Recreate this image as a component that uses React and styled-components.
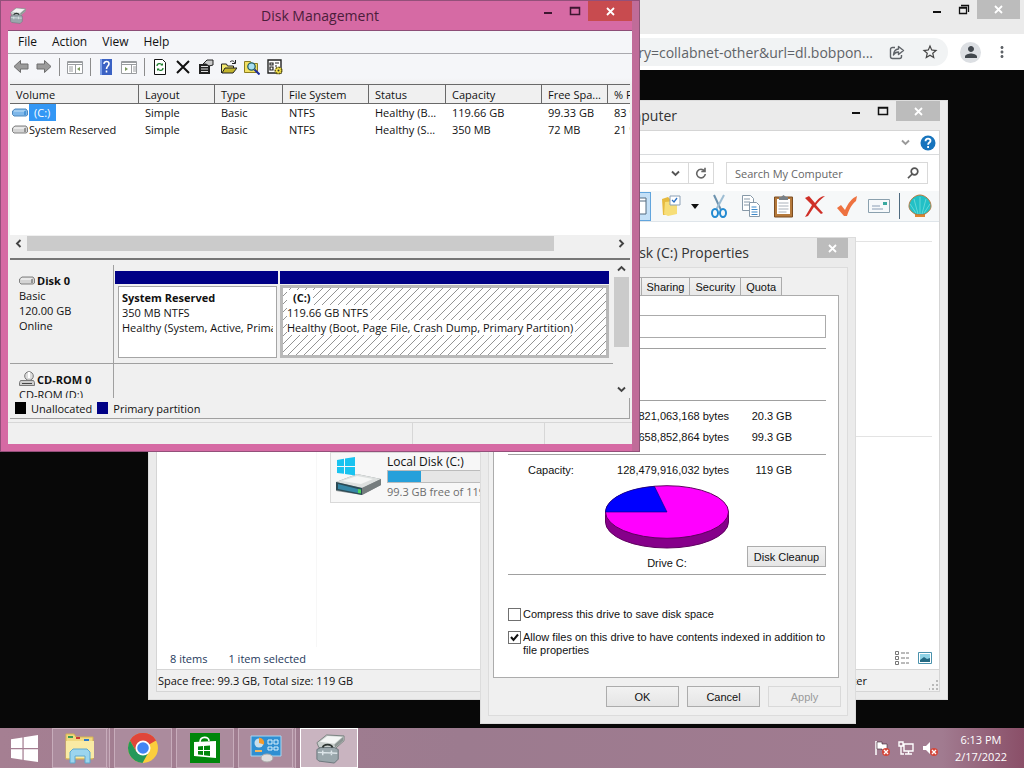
import React from "react";
import styled, { createGlobalStyle, css } from "styled-components";
import { MdStarBorder, MdPerson, MdMoreVert } from "react-icons/md";

const Global = createGlobalStyle`
  * { box-sizing: border-box; }
  body { margin: 0; background: #080808; font-family: "Open Sans", "Noto Sans", sans-serif; font-size: 11px; color: #111; }
  button, input { font: inherit; color: inherit; margin: 0; padding: 0; }
  button { background: none; border: 0; }
  svg { display: block; flex: none; }
`;

const Desktop = styled.div`
  position: relative;
  min-height: 100vh;
  display: flex;
  flex-direction: column;
  justify-content: flex-end;
  overflow: hidden;
  background: #080808;
`;

/* ---------- shared window parts ---------- */
const Window = styled.section`
  position: absolute;
  left: ${(p) => p.$x}px;
  top: ${(p) => p.$y}px;
  width: ${(p) => p.$w}px;
  min-height: ${(p) => p.$h}px;
  display: flex;
  flex-direction: column;
  background: #ebebeb;
  border: 1px solid #dcdcdc;
  padding: 0 7px 7px;
`;
const TitleBar = styled.header`
  display: flex;
  align-items: flex-start;
  height: 29px;
  flex: none;
`;
const Title = styled.h1`
  flex: 1;
  margin: 0;
  font-size: 14px;
  font-weight: 400;
  line-height: 30px;
  text-align: ${(p) => p.$align || "center"};
  color: ${(p) => p.$color || "#333"};
  white-space: nowrap;
`;
const WinButton = styled.button`
  display: flex;
  align-items: center;
  justify-content: center;
  width: ${(p) => p.$w || 27}px;
  height: ${(p) => p.$h || 20}px;
  color: ${(p) => p.$color || "#111"};
  background: ${(p) => p.$bg || "transparent"};
`;

const MinIcon = () => (
  <svg width="10" height="10" viewBox="0 0 10 10"><rect x="1" y="6" width="8" height="2" fill="currentColor" /></svg>
);
const MaxIcon = () => (
  <svg width="12" height="10" viewBox="0 0 12 10"><path d="M1.500 1.500h9v7h-9zM1 2h10" fill="none" stroke="currentColor" strokeWidth="1.500" /></svg>
);
const RestoreIcon = () => (
  <svg width="12" height="12" viewBox="0 0 12 12"><path d="M1.500 3.500h7v6h-7zM1 4h8M3 1.500h7.500v6.500" fill="none" stroke="currentColor" strokeWidth="1.300" /></svg>
);
const CloseIcon = () => (
  <svg width="9" height="9" viewBox="0 0 9 9"><path d="M1 1l7 7M8 1L1 8" stroke="#fff" strokeWidth="1.800" /></svg>
);
const Chevron = ({ dir = "down", color = "#444", size = 9 }) => {
  const turn = { down: 0, up: 180, left: 90, right: 270 }[dir];
  return (
    <svg width={size} height={size} viewBox="0 0 9 9">
      <path d="M1 2.500l3.500 3.500L8 2.500" fill="none" stroke={color} strokeWidth="1.900" transform={`rotate(${turn} 4.500 4.500)`} />
    </svg>
  );
};

/* ---------- browser ---------- */
const Browser = styled.section`
  position: absolute;
  inset: 0 0 auto 0;
  background: #fff;
`;
const TabStrip = styled.div`
  display: flex;
  justify-content: flex-end;
  height: 34px;
  padding-right: 4px;
  background: #ebebeb;
`;
const BrowserBar = styled.div`
  display: flex;
  align-items: center;
  gap: 12px;
  height: 36px;
  padding: 0 13px 0 60px;
`;
const UrlPill = styled.div`
  flex: 1;
  display: flex;
  align-items: center;
  justify-content: flex-end;
  gap: 16px;
  height: 28px;
  padding-right: 9px;
  border-radius: 14px;
  background: #f1f3f4;
  color: #5f6368;
  font-size: 14px;
  white-space: nowrap;
`;
const Avatar = styled.button`
  display: flex;
  align-items: center;
  justify-content: center;
  width: 21px;
  height: 21px;
  border-radius: 50%;
  background: #dcdfe3;
  color: #41474d;
`;
const PlainButton = styled.button`
  display: flex;
  align-items: center;
  justify-content: center;
  color: #5f6368;
`;

function BrowserWindow() {
  return (
    <Browser>
      <TabStrip>
        <WinButton aria-label="Minimize"><MinIcon /></WinButton>
        <WinButton aria-label="Restore"><RestoreIcon /></WinButton>
        <WinButton aria-label="Close" $w={43} $h={19} $bg="#bcbcbc"><CloseIcon /></WinButton>
      </TabStrip>
      <BrowserBar>
        <UrlPill>
          <span>category=collabnet-other&amp;url=dl.bobpon...</span>
          <PlainButton aria-label="Share">
            <svg width="16" height="15" viewBox="0 0 16 15" fill="none" stroke="#5f6368" strokeWidth="1.400">
              <path d="M6 2.500H3.500A2 2 0 0 0 1.500 4.500v7a2 2 0 0 0 2 2h7a2 2 0 0 0 2-2V10" />
              <path d="M9.500 1.500l5 4-5 4V7C7 7 5.500 8 4.500 10 4.700 6.500 6.500 4.300 9.500 4z" strokeLinejoin="round" />
            </svg>
          </PlainButton>
          <PlainButton aria-label="Bookmark"><MdStarBorder size={18} color="#444" /></PlainButton>
        </UrlPill>
        <Avatar aria-label="Profile"><MdPerson size={18} /></Avatar>
        <PlainButton aria-label="Menu"><MdMoreVert size={18} /></PlainButton>
      </BrowserBar>
    </Browser>
  );
}

/* ---------- file explorer ---------- */
const ExplorerBody = styled.div`
  flex: 1;
  display: flex;
  flex-direction: column;
  border: 1px solid #d5d5d5;
  background: #fff;
`;
const RibbonRow = styled.div`
  display: flex;
  align-items: center;
  justify-content: flex-end;
  gap: 10px;
  height: 24px;
  padding-right: 3px;
  border-bottom: 1px solid #d9dbdd;
`;
const AddressRow = styled.div`
  display: flex;
  gap: 12px;
  padding: 7px 11px 7px 12px;
  height: 36px;
`;
const AddressBox = styled.div`
  flex: 1;
  display: flex;
  justify-content: flex-end;
  border: 1px solid #d9d9d9;
`;
const AddressButton = styled.button`
  width: 25px;
  display: flex;
  align-items: center;
  justify-content: ${(p) => p.$align || "center"};
  & + & { border-left: 1px solid #d9d9d9; }
`;
const SearchBox = styled.label`
  display: flex;
  align-items: center;
  width: 202px;
  height: 22px;
  padding: 0 8px;
  border: 1px solid #d9d9d9;
  input { flex: 1; min-width: 0; border: 0; outline: 0; background: none; }
  input::placeholder { color: #666; opacity: 1; }
`;
const IconRow = styled.div`
  display: flex;
  align-items: center;
  justify-content: flex-end;
  gap: 8px;
  height: 31px;
  padding-right: 7px;
  background: #f6f8f9;
  border-bottom: 1px solid #dfe5ea;
`;
const IconButton = styled.button`
  width: ${(p) => p.$w || 24}px;
  height: 29px;
  display: flex;
  align-items: center;
  justify-content: center;
  ${(p) => p.$active && css`background: #c4e0f7; border: 1px solid #62a5dd;`}
`;
const Rule = styled.span`
  width: 1px;
  height: 26px;
  background: #4f6b80;
`;
const Panes = styled.div`
  flex: 1;
  display: grid;
  grid-template-columns: 160px 1fr;
`;
const NavPane = styled.nav`border-right: 1px solid #f7f7f7;`;
const Groups = styled.div`padding: 19px 7px 0 13px;`;
const Group = styled.section`
  min-height: 195px;
  border-top: 1px solid #e3e3e3;
  padding-top: 15px;
`;
const DriveTile = styled.article`
  display: flex;
  align-items: flex-start;
  gap: 5px;
  width: 256px;
  height: 51px;
  padding-left: 3px;
  border: 1px solid #d9d9d9;
  background: #f7f7f7;
  p { margin: 0; line-height: 17px; font-size: 12px; white-space: nowrap; }
  p:last-child { color: #6d6d6d; font-size: 11px; }
`;
const DriveBar = styled.div`
  width: 190px;
  height: 13px;
  border: 1px solid #bcbcbc;
  background: linear-gradient(90deg, #26a0da 0 33px, #e6e6e6 33px);
`;
const ItemBar = styled.footer`
  display: flex;
  align-items: center;
  gap: 21px;
  height: 22px;
  padding: 0 7px 0 13px;
  color: #1e395b;
`;
const Spacer = styled.span`
  flex: 1;
  ${(p) => p.$max && css`max-width: ${p.$max}px;`}
`;
const ViewIcons = styled.div`
  display: flex;
  align-items: center;
  gap: 8px;
`;
const StatusLine = styled.footer`
  display: flex;
  align-items: center;
  justify-content: space-between;
  height: 22px;
  padding: 0 72px 0 1px;
  border-top: 1px solid #d5d5d5;
  background: #f0f0f0;
`;
const Grip = styled.svg`
  position: absolute;
  right: 8px;
  bottom: 9px;
`;

const WindowsFlag = (p) => (
  <svg width={p.size} height={p.size} viewBox="0 0 26 26" fill={p.color}>
    <path d="M0 4l11-1.700V12.500H0zM12.200 2.100L26 0v12.500H12.200zM0 13.700h11v10.200L0 22.200zM12.200 13.700H26V26l-13.800-2z" />
  </svg>
);

const DriveArt = () => (
  <svg width="48" height="45" viewBox="0 -3 48 45">
    <path d="M2 26l21-8 24 5v6L28 39 2 35z" fill="#8d9496" />
    <path d="M2 26l21-8 24 5-19 9z" fill="#dde0df" />
    <path d="M8 25l15-5 16 3-12 5z" fill="#f5f6f5" />
    <path d="M2 26l26 6v7L2 34z" fill="#2b4a55" />
    <path d="M4 28l20 5v4L4 33z" fill="#3686a5" />
    <path d="M28 32l19-9v6L28 39z" fill="#767d7e" />
    <path d="M24 33l3 .600v4L24 37z" fill="#4bd65b" />
    <path d="M3 4l7-1.300V10H3zM11 2.500l10-1.500v9H11zM3 11h7v6.800L3 17zM11 11h10v8.500L11 18z" fill="#19c3f0" />
  </svg>
);

function Explorer() {
  return (
    <Window $x={148} $y={100} $w={800} $h={600}>
      <TitleBar>
        <Title $align="right">My Computer</Title>
        <Spacer $max={165} />
        <WinButton aria-label="Minimize"><MinIcon /></WinButton>
        <WinButton aria-label="Maximize"><MaxIcon /></WinButton>
        <WinButton aria-label="Close" $w={44} $bg="#bcbcbc"><CloseIcon /></WinButton>
      </TitleBar>
      <ExplorerBody>
        <RibbonRow>
          <Chevron color="#999" />
          <PlainButton aria-label="Help">
            <svg width="16" height="16" viewBox="0 0 16 16">
              <circle cx="8" cy="8" r="7.500" fill="#1774bd" />
              <path d="M5.500 6.200c0-3.500 5.200-3.300 5-.300-.100 1.700-2.400 1.700-2.400 3.800M8.100 11v2" fill="none" stroke="#fff" strokeWidth="1.800" />
            </svg>
          </PlainButton>
        </RibbonRow>
        <AddressRow>
          <AddressBox>
            <AddressButton aria-label="Previous locations"><Chevron color="#555" /></AddressButton>
            <AddressButton aria-label="Refresh">
              <svg width="12" height="12" viewBox="0 0 12 12" fill="none" stroke="#666" strokeWidth="1.600"><path d="M9.500 4A4.300 4.300 0 1 0 10.300 7M10 .800V4.500H6.300" /></svg>
            </AddressButton>
          </AddressBox>
          <SearchBox>
            <input aria-label="Search My Computer" placeholder="Search My Computer" />
            <svg width="12" height="12" viewBox="0 0 12 12" fill="none" stroke="#555" strokeWidth="1.700"><circle cx="7.500" cy="4.500" r="3.300" /><path d="M5.200 7L1 11.200" /></svg>
          </SearchBox>
        </AddressRow>
        <IconRow>
          <IconButton $active aria-label="Panes"><svg width="16" height="20" viewBox="0 0 16 20"><path d="M1 2h14v16H1zM1 5h14" fill="#fff" stroke="#536b80" /></svg></IconButton>
          <IconButton aria-label="Folder options">
            <svg width="22" height="24" viewBox="0 0 22 24"><path d="M2 5l6-2 3 3v14l-8 1z" fill="#e7bb3f" /><path d="M5 8l9-1 3 4v9l-9 2-4-2z" fill="#f7de78" /><path d="M10 2h10v9H10z" fill="#fff" stroke="#8ba0b5" /><path d="M12 6l2 2 3-4" fill="none" stroke="#2a6fc4" strokeWidth="1.300" /></svg>
          </IconButton>
          <IconButton $w={8} aria-label="More options"><svg width="8" height="5" viewBox="0 0 8 5"><path d="M0 0h8L4 5z" fill="#111" /></svg></IconButton>
          <IconButton aria-label="Cut">
            <svg width="18" height="24" viewBox="0 0 18 24" fill="none"><path d="M4 1l7 15" stroke="#6c92ae" strokeWidth="2" /><path d="M14 1L6 16" stroke="#9dbdd3" strokeWidth="2" /><ellipse cx="5" cy="19" rx="3" ry="4" stroke="#238ad1" strokeWidth="2" /><ellipse cx="13" cy="19" rx="3" ry="4" stroke="#238ad1" strokeWidth="2" /></svg>
          </IconButton>
          <IconButton aria-label="Copy">
            <svg width="20" height="24" viewBox="0 0 20 24" fill="#fff" stroke="#8799a8"><path d="M1.500 1.500h8l3 3v12h-11zM3 5h6M3 8h6M3 11h5" /><path d="M8.500 8.500h7l3 3v11h-10z" /><path d="M10.500 13h5M10.500 15.500h6M10.500 18h6M10.500 20.500h6" stroke="#3b87c8" /></svg>
          </IconButton>
          <IconButton aria-label="Paste">
            <svg width="21" height="24" viewBox="0 0 21 24"><path d="M1.500 3h18v20h-18z" fill="#b5793b" stroke="#7b4d22" /><path d="M4 5h13v15H4z" fill="#fff" /><path d="M5.500 9h10M5.500 12h10M5.500 15h10M5.500 18h8" stroke="#aab2bb" /><path d="M6 3h2l2.500-2L13 3h2v3H6z" fill="#788087" /></svg>
          </IconButton>
          <IconButton aria-label="Delete">
            <svg width="22" height="22" viewBox="0 0 22 22"><path d="M1 3l4-2 6 7c3-4 6-7 10-7-4 3-7 6-9 9l7 8-2 1-7-7-6 9-3 1 7-12z" fill="#cf2f27" /></svg>
          </IconButton>
          <IconButton aria-label="Apply properties">
            <svg width="22" height="22" viewBox="0 0 22 22"><path d="M1 13l4-3 4 5C12 8 16 3 21 1l-1 5c-5 4-7 9-9 15H8z" fill="#ee7240" /></svg>
          </IconButton>
          <IconButton aria-label="Mail">
            <svg width="22" height="16" viewBox="0 0 22 16"><path d="M.500 1.500h21v13H.500z" fill="#f6f9fb" stroke="#8aa0ae" /><path d="M15 4h4v3h-4z" fill="#39a9a0" /><path d="M4 8h8M4 11h11" stroke="#8a9db5" /></svg>
          </IconButton>
          <Rule />
          <IconButton aria-label="Shell">
            <svg width="24" height="24" viewBox="0 0 24 24"><path d="M7 17h10v6H7z" fill="#df8430" /><path d="M12 1c5 0 11 5 11 11 0 4-3 6-6 8-3 1-7 1-10 0-3-2-6-4-6-8C1 6 7 1 12 1z" fill="#22c0c6" stroke="#b9793f" /><path d="M12 20V3M10 20L6 5M14 20l4-15M8 19L2 10M16 19l6-9" stroke="#63d8d8" fill="none" /></svg>
          </IconButton>
        </IconRow>
        <Panes>
          <NavPane />
          <Groups>
            <Group />
            <Group>
              <DriveTile>
                <DriveArt />
                <div>
                  <p>Local Disk (C:)</p>
                  <DriveBar />
                  <p>99.3 GB free of 119 GB</p>
                </div>
              </DriveTile>
            </Group>
          </Groups>
        </Panes>
        <ItemBar>
          <span>8 items</span>
          <span>1 item selected</span>
          <Spacer />
          <ViewIcons>
            <svg width="16" height="14" viewBox="0 0 16 14" fill="none" stroke="#777"><path d="M1.500.500h3v3h-3zM1.500 5.500h3v3h-3zM1.500 10.500h3v3h-3z" /><path d="M7 2h8M7 7h8M7 12h8" strokeDasharray="4 1" /></svg>
            <svg width="14" height="12" viewBox="0 0 14 12"><path d="M.500.500h13v11H.500z" fill="#fff" stroke="#4a92ad" /><path d="M2 2h10v8H2z" fill="#8fd3e6" /><path d="M2 8l4-3 3 2 3-1v4H2z" fill="#246982" /></svg>
          </ViewIcons>
        </ItemBar>
        <StatusLine>
          <span>Space free: 99.3 GB, Total size: 119 GB</span>
          <span>Computer</span>
        </StatusLine>
      </ExplorerBody>
      <Grip width="10" height="10" viewBox="0 0 10 10"><path d="M7 0h2v2H7zM7 4h2v2H7zM3 4h2v2H3zM7 8h2v2H7zM3 8h2v2H3zM0 8h1v2H0z" fill="#b9b9b9" /></Grip>
    </Window>
  );
}

/* ---------- drive properties ---------- */
const PropsBody = styled.div`
  flex: 1;
  display: flex;
  flex-direction: column;
  padding: 9px 6px 8px 4px;
  border: 1px solid #dcdcdc;
  background: #f0f0f0;
  font-family: "Liberation Sans", Arial, sans-serif;
  font-size: 11px;
`;
const TabRow = styled.div`
  display: flex;
  height: 18px;
  padding-left: 2px;
`;
const Tab = styled.button`
  padding: 0 5px;
  border: 1px solid #acacac;
  border-bottom: 0;
  border-left-width: ${(p) => (p.$first ? 1 : 0)}px;
  background: ${(p) => (p.$first ? "#fff" : "linear-gradient(#f2f2f2, #e8e8e8)")};
`;
const TabPage = styled.div`
  flex: 1;
  display: flex;
  flex-direction: column;
  margin-right: 2px;
  padding: 19px 12px 10px 14px;
  border: 1px solid #acacac;
  background: #fff;
`;
const VolumeInput = styled.input`
  width: 246px;
  height: 23px;
  align-self: flex-end;
  border: 1px solid #ababab;
  background: #fff;
`;
const Divider = styled.hr`
  width: 100%;
  margin: ${(p) => p.$top}px 0 0;
  border: 0;
  border-top: 1px solid #a0a0a0;
`;
const SizeTable = styled.table`
  border-collapse: collapse;
  width: 284px;
  margin-top: ${(p) => p.$top}px;
  td, th { height: 21px; padding: 0; font-weight: 400; }
  th { text-align: left; padding-left: 20px; }
  td { text-align: right; }
  td:last-child { width: 63px; }
`;
const PieRow = styled.div`
  display: grid;
  grid-template-columns: 1fr 124px 1fr;
  align-items: end;
  margin-top: 5px;
  > button { margin-bottom: 4px; }
`;
const PieFigure = styled.figure`
  margin: 0;
  grid-column: 2;
  text-align: center;
  figcaption { line-height: 16px; margin-top: 6px; }
`;
const PushButton = styled.button`
  width: ${(p) => p.$w || 73}px;
  height: 21px;
  border: 1px solid ${(p) => (p.disabled ? "#d9d9d9" : "#acacac")};
  background: ${(p) => (p.disabled ? "#efefef" : "linear-gradient(#f2f2f2, #e5e5e5)")};
  color: ${(p) => (p.disabled ? "#9a9a9a" : "#111")};
  justify-self: end;
`;
const CheckLabel = styled.label`
  display: flex;
  align-items: flex-start;
  gap: 2px;
  margin: ${(p) => p.$top}px -10px 0 0;
  line-height: 13px;
  input {
    appearance: none;
    flex: none;
    display: block;
    width: 13px;
    height: 13px;
    border: 1px solid #707070;
    background: #fff;
  }
`;
const CheckBoxWrap = styled.span`
  position: relative;
  flex: none;
  display: block;
  height: 13px;
  svg { position: absolute; inset: 2px; pointer-events: none; }
`;
const DialogButtons = styled.div`
  display: flex;
  justify-content: flex-end;
  gap: 8px;
  padding: 8px 0 0;
`;

function Check({ checked, top, children }) {
  return (
    <CheckLabel $top={top}>
      <CheckBoxWrap>
        <input type="checkbox" defaultChecked={checked} />
        {checked && <svg width="9" height="9" viewBox="0 0 9 9"><path d="M1 4l2.500 3L8 1.500" fill="none" stroke="#111" strokeWidth="2" /></svg>}
      </CheckBoxWrap>
      <span>{children}</span>
    </CheckLabel>
  );
}

function Properties() {
  return (
    <Window $x={480} $y={237} $w={376} $h={487}>
      <TitleBar>
        <Spacer $max={32} />
        <Title>Local Disk (C:) Properties</Title>
        <WinButton aria-label="Close" $w={31} $bg="#bcbcbc"><CloseIcon /></WinButton>
      </TitleBar>
      <PropsBody>
        <TabRow>
          <Tab $first>General</Tab>
          <Tab>Tools</Tab>
          <Tab>Hardware</Tab>
          <Tab>Sharing</Tab>
          <Tab>Security</Tab>
          <Tab>Quota</Tab>
        </TabRow>
        <TabPage>
          <VolumeInput aria-label="Volume label" />
          <Divider $top={10} />
          <Divider $top={51} />
          <SizeTable $top={4}>
            <tbody>
              <tr><th scope="row">Used space:</th><td>21,821,063,168 bytes</td><td>20.3 GB</td></tr>
              <tr><th scope="row">Free space:</th><td>106,658,852,864 bytes</td><td>99.3 GB</td></tr>
            </tbody>
          </SizeTable>
          <Divider $top={7} />
          <SizeTable $top={4}>
            <tbody>
              <tr><th scope="row">Capacity:</th><td>128,479,916,032 bytes</td><td>119 GB</td></tr>
            </tbody>
          </SizeTable>
          <PieRow>
            <PieFigure>
              <svg width="124" height="64" viewBox="0 0 124 64">
                <path d="M.500 27v10a61.500 26 0 0 0 123 0V27z" fill="#86008a" stroke="#600060" strokeWidth="1" />
                <ellipse cx="62" cy="27" rx="61.500" ry="26.300" fill="#f0f" stroke="#600060" strokeWidth="1" />
                <path d="M62 27H.500C1 14 22 3 49.500 1.500z" fill="#00f" stroke="#00007a" strokeWidth=".6" />
              </svg>
              <figcaption>Drive C:</figcaption>
            </PieFigure>
            <PushButton $w={79}>Disk Cleanup</PushButton>
          </PieRow>
          <Divider $top={3} />
          <Check top={33}>Compress this drive to save disk space</Check>
          <Check top={10} checked>Allow files on this drive to have contents indexed in addition to file properties</Check>
        </TabPage>
        <DialogButtons>
          <PushButton>OK</PushButton>
          <PushButton>Cancel</PushButton>
          <PushButton disabled>Apply</PushButton>
        </DialogButtons>
      </PropsBody>
    </Window>
  );
}

/* ---------- disk management ---------- */
const PinkWindow = styled(Window)`
  background: #d66aa4;
  border-color: #93507a;
  border-right-color: #8c5577;
  box-shadow: inset -7px 0 0 #c06c99;
`;
const ManagerSlot = styled.span`
  width: 98px;
  padding: 6px 0 0 1px;
`;
const ConsoleBody = styled.div`
  flex: 1;
  display: flex;
  flex-direction: column;
  border-top: 1px solid #8d4d77;
  background: #f0f0f0;
`;
const MenuBar = styled.nav`
  display: flex;
  align-items: center;
  gap: 15px;
  height: 23px;
  padding: 0 10px 2px;
  background: #f5f6f9;
  border-bottom: 1px solid #a9a9ae;
  button { font-size: 12px; }
`;
const ToolRow = styled.div`
  display: flex;
  align-items: center;
  gap: 7px;
  height: 30px;
  padding: 0 5px 4px;
  background: linear-gradient(#f5f6f9 80%, #f0f0f0);
`;
const ToolButton = styled.button`
  display: flex;
  width: 16px;
  height: 18px;
  align-items: center;
  justify-content: center;
`;
const ToolSep = styled.span`
  width: 1px;
  height: 18px;
  background: #8c8c8c;
`;
const VolumePane = styled.div`
  display: flex;
  flex-direction: column;
  justify-content: space-between;
  height: 176px;
  margin: 0 2px;
  overflow: hidden;
  background: #fff;
  border-top: 1px solid #696969;
  border-bottom: 2px solid #777;
`;
const VolumeTable = styled.table`
  width: 668px;
  table-layout: fixed;
  border-collapse: separate;
  border-spacing: 0;
  th, td { padding: 0 0 0 6px; text-align: left; font-weight: 400; white-space: nowrap; overflow: hidden; }
  th { height: 19px; background: #f0f0f0; border-right: 1px solid #696969; border-bottom: 1px solid #696969; }
  td { height: 17px; }
  td:first-child { padding-left: 2px; }
`;
const VolumeName = styled.span`
  display: flex;
  align-items: center;
  gap: 1px;
`;
const VolumeLabel = styled.span`
  line-height: 17px;
  ${(p) => p.$selected && css`padding: 0 6px 0 5px; background: #3397f5; color: #fff;`}
`;
const HScroll = styled.div`
  display: grid;
  grid-template-columns: 17px 1fr 17px;
  align-items: center;
  justify-items: center;
  height: 23px;
  padding-bottom: 7px;
  background: #f0f0f0;
`;
const HThumb = styled.span`
  justify-self: start;
  width: 90%;
  height: 15px;
  background: #cbcbcb;
`;
const DiskPane = styled.div`
  display: grid;
  grid-template-columns: 1fr 17px;
  grid-template-rows: minmax(0, 1fr);
  height: 138px;
  margin: 0 2px;
`;
const DiskList = styled.div`
  padding-top: 5px;
  overflow: hidden;
`;
const DiskRow = styled.div`
  display: grid;
  grid-template-columns: 104px 1fr;
  height: ${(p) => p.$h}px;
  overflow: hidden;
  border-bottom: 1px solid #a0a0a0;
`;
const DiskHead = styled.div`
  padding: 7px 0 0 9px;
  border-right: 1px solid #a0a0a0;
  line-height: 15px;
  white-space: nowrap;
  p { margin: 0; }
`;
const DiskName = styled.strong`
  display: flex;
  align-items: center;
  gap: 2px;
  height: 16px;
`;
const Partitions = styled.div`
  display: grid;
  grid-template-columns: 163px 1fr;
  gap: 2px;
  padding: 6px 4px 5px 1px;
`;
const Partition = styled.article`
  display: flex;
  flex-direction: column;
  min-width: 0;
  &::before { content: ""; height: 13px; background: #000085; flex: none; }
`;
const hatched = css`
  margin-top: 1px;
  padding: 2px 4px 0;
  border: 3px solid #b9b9b9;
  background: linear-gradient(135deg, #fff 45%, #949494 45% 54%, #fff 54%) 0 0 / 8px 8px;
`;
const plain = css`
  margin: 2px 1px 0 3px;
  padding: 3px 3px 0;
  border: 1px solid #a5a5a5;
  background: #fff;
`;
const PartitionBody = styled.div`
  flex: 1;
  ${(p) => (p.$hatched ? hatched : plain)}
  line-height: 15px;
  white-space: nowrap;
  p { margin: 0; overflow: hidden; }
  p > * { background: #fff; padding-right: 2px; }
  p > strong { padding-left: ${(p) => (p.$hatched ? 6 : 0)}px; }
`;
const VScroll = styled.div`
  display: flex;
  flex-direction: column;
  align-items: center;
  padding: 4px 0;
`;
const VThumb = styled.span`
  width: 15px;
  height: 70px;
  margin: 4px 0 auto;
  background: #cbcbcb;
`;
const Legend = styled.div`
  display: flex;
  align-items: center;
  gap: 5px;
  height: 21px;
  margin: 0 2px;
  padding-left: 5px;
  border-bottom: 1px solid #a0a0a0;
  border-right: 1px solid #a0a0a0;
`;
const Swatch = styled.span`
  width: 11px;
  height: 12px;
  background: ${(p) => p.$color};
`;
const ConsoleStatus = styled.footer`
  flex: 1;
  display: grid;
  grid-template-columns: 1fr 132px 88px;
  margin-top: 3px;
  border-top: 1px solid #d7d7d7;
  span { border-left: 1px solid #d7d7d7; }
  span:first-child { border: 0; }
`;

const SmallDrive = ({ blue }) => (
  <svg width="16" height="9" viewBox="0 0 16 9">
    <path d="M3 1h11l1.500 2v4L14 8H2L.500 6.500V3z" fill={blue ? "#7fb8ea" : "#d4d4d4"} stroke={blue ? "#4f88bd" : "#808080"} />
    <path d="M2 3h11" stroke={blue ? "#c6e2f8" : "#fff"} />
    <path d="M13 3v4" stroke={blue ? "#1a74c4" : "#555"} />
  </svg>
);
const ManagerIcon = ({ size }) => (
  <svg width={size} height={size} viewBox="0 0 32 32">
    <path d="M3 10L13 2l18 1v5l-9 8-17-1z" fill="#c9cfcd" stroke="#7a8381" />
    <path d="M6 9l8-6 15 1-8 7z" fill="#f3f5f4" />
    <path d="M21 12l9-8v4l-8 7z" fill="#8b9492" />
    <path d="M3 17l4-2h14l4 2v10l-4 4-16-2-2-2z" fill="#9aa7ac" stroke="#6b777c" />
    <path d="M9 15c1-4 9-4 10 0" fill="none" stroke="#2d3532" strokeWidth="2" />
    <path d="M4 20l20 1M9 18v5M18 18v5" stroke="#dde5e9" strokeWidth="1.500" />
  </svg>
);

const arrowPath = "M1 7.500L7.500 1.500V5H15v5H7.500v3.500z";
const TOOLS = [
  ["Back", <path key="a" d={arrowPath} fill="#9b9b9b" stroke="#6e6e6e" />],
  ["Forward", <path key="a" d={arrowPath} fill="#9b9b9b" stroke="#6e6e6e" transform="matrix(-1 0 0 1 16 0)" />],
  null,
  ["Console tree", <g key="a" fill="none" stroke="#9a9da0"><path d="M.500 2.500h15v12H.500z" fill="#fff" /><path d="M.500 3.500h15M0 5.500h16M8.500 6v8M2 8h4M2 10h4M2 12h4" /><path d="M13 8v4l-3-2z" fill="#7b9a5c" stroke="none" /></g>],
  null,
  ["Help", <g key="a"><path d="M2 0h12v16H2z" fill="#3b62c4" /><path d="M2 0h2v16H2z" fill="#7ea0e8" /><path d="M6 5c0-3.500 5-3 5-.300C11 7 8.500 7 8.500 10M8.500 11.500v2" fill="none" stroke="#fff" strokeWidth="1.600" /></g>],
  ["Action pane", <g key="a" fill="none" stroke="#9a9da0"><path d="M.500 2.500h15v12H.500z" fill="#fff" /><path d="M.500 3.500h15M0 5.500h16M10.500 6v8M12 8h3M12 10h3M12 12h3" /><path d="M4 8v4l3-2z" fill="#7b9a5c" stroke="none" /></g>],
  null,
  ["Refresh", <g key="a"><path d="M2.500.500h8l3 3v12h-11z" fill="#fff" stroke="#111" /><path d="M5 7c0-3 4-3 5-1M11 9c0 3-4 3-5 1" fill="none" stroke="#208030" strokeWidth="1.300" /><path d="M8.500 6.500H11V4zM7.500 9.500H5V12z" fill="#208030" /></g>],
  ["Delete", <path key="a" d="M2 2l12 12M14 2L2 14" stroke="#111" strokeWidth="2" />],
  ["Properties", <g key="a"><path d="M1 5h11v10H1z" fill="#222" /><path d="M3 7.500h7M3 10h7M3 12.500h7" stroke="#ddd" /><path d="M5 5l4-4h6v5l-4 1-3-2z" fill="#c9c9c9" stroke="#222" /></g>],
  ["Open", <g key="a" stroke="#222"><path d="M.500 14V5h5l1 2h6v2" fill="#f4ea72" /><path d="M1 14l3-5h12l-4 5z" fill="#c3b52c" /><path d="M9 3c2-2 4-1 5 1M14.500 1v3.500H11" fill="none" /></g>],
  ["Find", <g key="a"><path d="M.500 2.500h6l1 2h6v9H.500z" fill="#f2e063" stroke="#8d7e20" /><circle cx="7.500" cy="7.500" r="3.700" fill="#a9dff2" stroke="#245f65" strokeWidth="1.300" /><path d="M10.500 10.500l5 5" stroke="#1d2d9b" strokeWidth="2" /></g>],
  ["Settings", <g key="a"><path d="M1 1h13v13H1z" fill="#fff" stroke="#222" strokeWidth="1.400" /><path d="M3 4h3v2H3zM8 4h4M3 8h3v3H3zM8 7h2" fill="none" stroke="#222" strokeWidth="1.200" /><circle cx="11.500" cy="11.500" r="3.300" fill="#f7e44a" stroke="#5d5612" strokeWidth="1.500" strokeDasharray="2 1" /><circle cx="11.500" cy="11.500" r="1" fill="#333" /></g>],
];

const COLS = [129, 76, 68, 86, 77, 96, 66, 70];
const HEADS = ["Volume", "Layout", "Type", "File System", "Status", "Capacity", "Free Spa...", "% Free"];
const VOLUMES = [
  ["(C:)", "Simple", "Basic", "NTFS", "Healthy (B...", "119.66 GB", "99.33 GB", "83 %"],
  ["System Reserved", "Simple", "Basic", "NTFS", "Healthy (S...", "350 MB", "72 MB", "21 %"],
];

function DiskManagement() {
  return (
    <PinkWindow $x={0} $y={0} $w={640} $h={452}>
      <TitleBar>
        <ManagerSlot><ManagerIcon size={17} /></ManagerSlot>
        <Title $color="#4b1d3b">Disk Management</Title>
        <WinButton aria-label="Minimize" $color="#3d1630"><MinIcon /></WinButton>
        <WinButton aria-label="Maximize" $color="#3d1630"><MaxIcon /></WinButton>
        <WinButton aria-label="Close" $w={44} $bg="#c84b4f"><CloseIcon /></WinButton>
      </TitleBar>
      <ConsoleBody>
        <MenuBar>
          <button>File</button><button>Action</button><button>View</button><button>Help</button>
        </MenuBar>
        <ToolRow>
          {TOOLS.map((t, i) =>
            t ? (
              <ToolButton key={i} aria-label={t[0]}><svg width="16" height="16" viewBox="0 0 16 16">{t[1]}</svg></ToolButton>
            ) : (
              <ToolSep key={i} />
            )
          )}
        </ToolRow>
        <VolumePane>
          <VolumeTable>
            <colgroup>{COLS.map((w, i) => <col key={i} style={{ width: w }} />)}</colgroup>
            <thead><tr>{HEADS.map((h) => <th key={h} scope="col">{h}</th>)}</tr></thead>
            <tbody>
              {VOLUMES.map((row, r) => (
                <tr key={row[0]}>
                  {row.map((cell, i) => (
                    <td key={i}>
                      {i ? cell : (
                        <VolumeName>
                          <SmallDrive blue={r === 0} />
                          <VolumeLabel $selected={r === 0}>{cell}</VolumeLabel>
                        </VolumeName>
                      )}
                    </td>
                  ))}
                </tr>
              ))}
            </tbody>
          </VolumeTable>
          <HScroll><Chevron dir="left" /><HThumb /><Chevron dir="right" /></HScroll>
        </VolumePane>
        <DiskPane>
          <DiskList>
            <DiskRow $h={99}>
              <DiskHead>
                <DiskName><SmallDrive />Disk 0</DiskName>
                <p>Basic</p><p>120.00 GB</p><p>Online</p>
              </DiskHead>
              <Partitions>
                <Partition>
                  <PartitionBody>
                    <p><strong>System Reserved</strong></p>
                    <p><span>350 MB NTFS</span></p>
                    <p><span>Healthy (System, Active, Primary Partition)</span></p>
                  </PartitionBody>
                </Partition>
                <Partition>
                  <PartitionBody $hatched>
                    <p><strong>(C:)</strong></p>
                    <p><span>119.66 GB NTFS</span></p>
                    <p><span>Healthy (Boot, Page File, Crash Dump, Primary Partition)</span></p>
                  </PartitionBody>
                </Partition>
              </Partitions>
            </DiskRow>
            <DiskRow $h={60}>
              <DiskHead>
                <DiskName>
                  <svg width="16" height="16" viewBox="0 0 16 16" stroke="#777"><circle cx="10" cy="5" r="4.300" fill="#ddd" /><path d="M10 1v6" stroke="#fff" strokeWidth="2" /><path d="M1.500 9.500h13l1 2v3H.500v-3z" fill="#ccc" /><path d="M3 12.500h10" stroke="#444" /></svg>
                  CD-ROM 0
                </DiskName>
                <p>CD-ROM (D:)</p>
              </DiskHead>
            </DiskRow>
          </DiskList>
          <VScroll><Chevron dir="up" /><VThumb /><Chevron /></VScroll>
        </DiskPane>
        <Legend>
          <Swatch $color="#000" /><span>Unallocated</span>
          <Swatch $color="#000085" /><span>Primary partition</span>
        </Legend>
        <ConsoleStatus><span /><span /><span /></ConsoleStatus>
      </ConsoleBody>
    </PinkWindow>
  );
}

/* ---------- taskbar ---------- */
const Taskbar = styled.footer`
  display: flex;
  align-items: stretch;
  gap: 4px;
  height: 40px;
  padding-right: 17px;
  background: linear-gradient(90deg, #a57f92, #9c7b8f 45%, #a17b90 92%, #8a4f68);
`;
const TaskButton = styled.button`
  width: ${(p) => p.$w || 58}px;
  display: flex;
  align-items: center;
  justify-content: center;
  ${(p) => !p.$bare && css`border: 1px solid #c7acbb; background: #ab8b9d;`}
  ${(p) => p.$stacked && css`border-right: 4px double #c7acbb;`}
  ${(p) => p.$active && css`border: 1px solid #fff; background: #c9b4c0;`}
`;
const Tray = styled.div`
  display: flex;
  align-items: center;
  gap: 8px;
  padding-right: 13px;
`;
const Clock = styled.time`
  align-self: center;
  color: #fff;
  line-height: 17px;
  text-align: center;
`;
const RedX = () => (
  <g><circle cx="12" cy="12" r="4" fill="#d4473b" /><path d="M10 10l4 4M14 10l-4 4" stroke="#fff" strokeWidth="1.300" /></g>
);

function TaskbarView() {
  return (
    <Taskbar>
      <TaskButton $bare $w={48} aria-label="Start"><WindowsFlag size={27} color="#fff" /></TaskButton>
      <TaskButton $stacked aria-label="File Explorer">
        <svg width="32" height="32" viewBox="0 0 32 32"><path d="M2 2h8l2 3h17v22H2z" fill="#f1d980" stroke="#d5b350" /><path d="M4 4h5v2H4z" fill="#3a9b54" /><path d="M12 5h4v2h-4z" fill="#cf3c33" /><path d="M20 7h5v2h-5z" fill="#2e79c8" /><path d="M2 9h28v17H2z" fill="#f9eaa4" /><path d="M6 31V20l3-3h14l3 3v11h-5v-7H11v7z" fill="#9bd5ee" stroke="#5fa9ce" /></svg>
      </TaskButton>
      <TaskButton aria-label="Chrome">
        <svg width="32" height="32" viewBox="0 0 32 32"><circle cx="16" cy="16" r="15" fill="#fbce3d" /><path d="M16 16L3 8.500A15 15 0 0 1 29 8.500z" fill="#e0463a" /><path d="M16 8.500h13A15 15 0 0 0 3 8.500L9.500 20z" fill="#e0463a" /><path d="M3 8.500A15 15 0 0 0 15.500 31l6.500-11.500L9.500 20z" fill="#24985a" /><circle cx="16" cy="16" r="7.500" fill="#fff" /><circle cx="16" cy="16" r="5.800" fill="#4285f4" /></svg>
      </TaskButton>
      <TaskButton aria-label="Store">
        <svg width="30" height="30" viewBox="0 0 30 30"><path d="M0 0h30v30H0z" fill="#00860b" /><path d="M4 9l22-1v17L4 23z" fill="#fff" /><path d="M10 9c0-6 9-6 9-1" fill="none" stroke="#fff" strokeWidth="1.600" /><path d="M8 13.500l5-.500v4H8zM14 13l6-.500V17h-6zM8 18h5v4l-5-.500zM14 18h6v5l-6-.700z" fill="#00860b" /></svg>
      </TaskButton>
      <TaskButton $stacked aria-label="Control Panel">
        <svg width="32" height="30" viewBox="0 0 32 30"><path d="M1 3h30v20H1z" fill="#2f8fd2" stroke="#a7d7f2" /><circle cx="9" cy="10" r="4.500" fill="#c8dfec" /><path d="M9 10V4.500a5.500 5.500 0 0 1 5 7z" fill="#f39b2d" /><path d="M18 7h4v4h-4zM24 7h4v4h-4zM18 14h4v3h-4zM24 14h4v3h-4z" fill="none" stroke="#d9f0fb" /><path d="M5 18h7" stroke="#f3b75c" strokeWidth="2" /><ellipse cx="17" cy="25" rx="6" ry="4" fill="#dedede" stroke="#aaa" /></svg>
      </TaskButton>
      <TaskButton $active aria-label="Disk Management"><ManagerIcon size={31} /></TaskButton>
      <Spacer />
      <Tray>
        <svg width="16" height="16" viewBox="0 0 16 16"><path d="M2 1v14" stroke="#fff" strokeWidth="1.500" /><path d="M3 2h5v2h5v6H8V9H3z" fill="#fff" stroke="#3d2734" strokeWidth=".6" /><RedX /></svg>
        <svg width="16" height="16" viewBox="0 0 16 16" fill="none" stroke="#fff" strokeWidth="1.400"><path d="M6 4h9v7H6zM7 14h7M10.500 11v3M1 2h4v4H1zM3 6v8h3" /></svg>
        <svg width="16" height="16" viewBox="0 0 16 16"><path d="M1 6h3l4-4v12l-4-4H1z" fill="#fff" /><RedX /></svg>
      </Tray>
      <Clock>6:13 PM<br />2/17/2022</Clock>
    </Taskbar>
  );
}

export default function App() {
  return (
    <>
      <Global />
      <Desktop>
        <BrowserWindow />
        <Explorer />
        <Properties />
        <DiskManagement />
        <TaskbarView />
      </Desktop>
    </>
  );
}
